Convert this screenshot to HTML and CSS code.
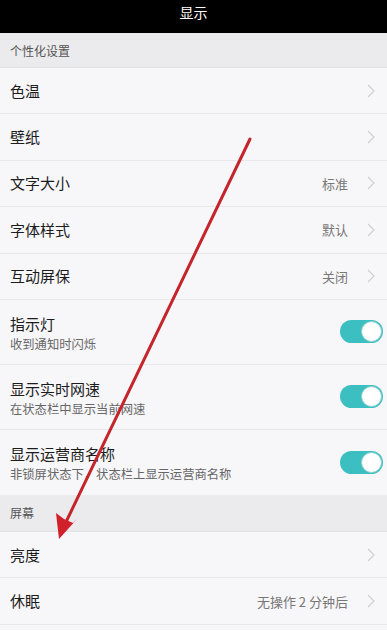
FILE: index.html
```html
<!DOCTYPE html>
<html lang="zh">
<head>
<meta charset="utf-8">
<link rel="stylesheet" href="styles.css">
</head>
<body>
<div class="screen">
  <div class="titlebar">显示</div>
  <div class="section">个性化设置</div>
  <div class="row"><span class="label">色温</span><span class="right"><svg class="chev" width="8" height="14" viewBox="0 0 8 14"><polyline points="1,1 7,7 1,13" fill="none" stroke="#cfcfd2" stroke-width="1.2"/></svg></span></div>
  <div class="row"><span class="label">壁纸</span><span class="right"><svg class="chev" width="8" height="14" viewBox="0 0 8 14"><polyline points="1,1 7,7 1,13" fill="none" stroke="#cfcfd2" stroke-width="1.2"/></svg></span></div>
  <div class="row"><span class="label">文字大小</span><span class="right"><span class="value">标准</span><svg class="chev" width="8" height="14" viewBox="0 0 8 14"><polyline points="1,1 7,7 1,13" fill="none" stroke="#cfcfd2" stroke-width="1.2"/></svg></span></div>
  <div class="row"><span class="label">字体样式</span><span class="right"><span class="value">默认</span><svg class="chev" width="8" height="14" viewBox="0 0 8 14"><polyline points="1,1 7,7 1,13" fill="none" stroke="#cfcfd2" stroke-width="1.2"/></svg></span></div>
  <div class="row"><span class="label">互动屏保</span><span class="right"><span class="value">关闭</span><svg class="chev" width="8" height="14" viewBox="0 0 8 14"><polyline points="1,1 7,7 1,13" fill="none" stroke="#cfcfd2" stroke-width="1.2"/></svg></span></div>
  <div class="row tall"><span class="texts"><span class="label">指示灯</span><span class="sub">收到通知时闪烁</span></span><span class="toggle"><span class="knob"></span></span></div>
  <div class="row tall"><span class="texts"><span class="label">显示实时网速</span><span class="sub">在状态栏中显示当前网速</span></span><span class="toggle"><span class="knob"></span></span></div>
  <div class="row tall last"><span class="texts"><span class="label">显示运营商名称</span><span class="sub">非锁屏状态下，状态栏上显示运营商名称</span></span><span class="toggle"><span class="knob"></span></span></div>
  <div class="section tallsec">屏幕</div>
  <div class="row"><span class="label">亮度</span><span class="right"><svg class="chev" width="8" height="14" viewBox="0 0 8 14"><polyline points="1,1 7,7 1,13" fill="none" stroke="#cfcfd2" stroke-width="1.2"/></svg></span></div>
  <div class="row"><span class="label">休眠</span><span class="right"><span class="value">无操作 2 分钟后</span><svg class="chev" width="8" height="14" viewBox="0 0 8 14"><polyline points="1,1 7,7 1,13" fill="none" stroke="#cfcfd2" stroke-width="1.2"/></svg></span></div>
  <svg class="arrow" width="387" height="630" viewBox="0 0 387 630">
    <line x1="250" y1="139" x2="66" y2="522" stroke="#c4252b" stroke-width="3" stroke-linecap="round"/>
    <polygon points="59,539 56,513 64,519 73,523 77,519" fill="#d0202a"/>
  </svg>
</div>
</body>
</html>
```
FILE: styles.css
```css
* { box-sizing: border-box; }
html, body { margin: 0; padding: 0; }
body {
  font-family: "Noto Sans CJK SC", "Noto Sans", sans-serif;
  background: #f7f6f9;
}
.screen {
  position: relative;
  width: 387px;
  height: 630px;
  overflow: hidden;
  background: #f7f6f9;
}
.titlebar {
  height: 33px;
  background: #000;
  color: #fff;
  font-size: 14px;
  display: flex;
  align-items: center;
  justify-content: center;
  padding-bottom: 9px;
}
.section {
  height: 35px;
  background: #ebeaed;
  color: #555;
  font-size: 12px;
  display: flex;
  align-items: center;
  padding-left: 10px;
  border-bottom: 1px solid #e2e1e4;
}
.section.tallsec { height: 37px; }
.row {
  height: 46.4px;
  display: flex;
  align-items: center;
  justify-content: space-between;
  padding: 0 10px 0 10px;
  border-bottom: 1px solid #e8e7ea;
}
.row.tall { height: 65px; }
.row.last { border-bottom: none; }
.label {
  font-size: 15px;
  color: #1c1c1c;
  line-height: 20px;
}
.texts {
  display: flex;
  flex-direction: column;
  gap: 2px;
  padding-top: 2px;
}
.sub {
  font-size: 12.3px;
  color: #666;
  line-height: 16px;
}
.right {
  display: flex;
  align-items: center;
}
.value {
  font-size: 13px;
  color: #777;
  margin-right: 19px;
}
.chev {
  display: block;
  margin-right: 2px;
}
.toggle {
  width: 43px;
  height: 23px;
  border-radius: 12px;
  background: #3cbfc1;
  display: flex;
  align-items: center;
  justify-content: flex-end;
  padding-right: 1px;
  margin-right: -6px;
}
.knob {
  width: 21px;
  height: 21px;
  border-radius: 50%;
  background: #fff;
  border: 1px solid #8ccfd0;
}
.arrow {
  position: absolute;
  left: 0;
  top: 0;
  pointer-events: none;
}
```
